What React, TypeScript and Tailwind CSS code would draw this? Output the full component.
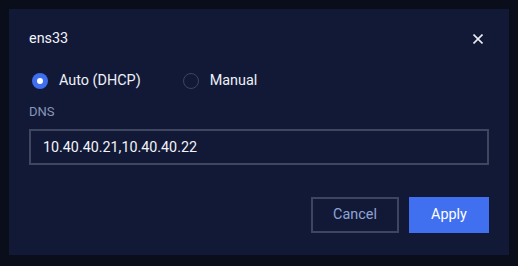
import { useState } from "react";

function Radio({ checked }: { checked: boolean }) {
  return checked ? (
    <span className="flex h-4 w-4 items-center justify-center rounded-full bg-[#3f6ef0]">
      <span className="h-1.5 w-1.5 rounded-full bg-white" />
    </span>
  ) : (
    <span className="h-4 w-4 rounded-full border border-[#3a4466]" />
  );
}

export default function App() {
  const [mode, setMode] = useState<"auto" | "manual">("auto");

  return (
    <div
      className="h-[266px] w-[518px] bg-[#0a0d1a] p-[9px]"
      style={{ fontFamily: "Roboto, 'Liberation Sans', sans-serif" }}
    >
      <div className="flex h-[246px] w-[500px] flex-col bg-[#121937] px-5 pt-5">
        {/* Header */}
        <div className="flex h-5 items-center justify-between">
          <span className="text-[14.4px] leading-5 text-[#f2f4f8]">ens33</span>
          <button className="mr-[3px] flex h-4 w-4 items-center justify-center text-[#e8ebf2]">
            <svg width="10" height="10" viewBox="0 0 10 10" fill="none">
              <path d="M0.5 0.5L9.5 9.5M9.5 0.5L0.5 9.5" stroke="currentColor" strokeWidth="1.6" />
            </svg>
          </button>
        </div>

        {/* Mode */}
        <div className="mt-[22px] flex h-5 items-center pl-[3px]">
          <label className="flex cursor-pointer items-center gap-[11px]" onClick={() => setMode("auto")}>
            <Radio checked={mode === "auto"} />
            <span className="text-[14.4px] leading-5 text-[#eef1f7]">Auto (DHCP)</span>
          </label>
          <label className="ml-[42px] flex cursor-pointer items-center gap-[11px]" onClick={() => setMode("manual")}>
            <Radio checked={mode === "manual"} />
            <span className="text-[14.4px] leading-5 text-[#eef1f7]">Manual</span>
          </label>
        </div>

        {/* DNS */}
        <div className="mt-[13px] text-[13px] leading-4 text-[#8796b8]">DNS</div>
        <input
          className="mt-[9px] h-9 w-full border-2 border-[#3f465f] bg-transparent px-3 text-[14.3px] text-[#f2f4f8] outline-none"
          defaultValue="10.40.40.21,10.40.40.22"
        />

        {/* Actions */}
        <div className="mt-8 flex justify-end gap-[10px]">
          <button className="h-9 w-[88px] border-2 border-[#3d4560] text-[14.4px] text-[#8ea4d6]">Cancel</button>
          <button className="h-9 w-20 bg-[#4070f0] text-[14.4px] text-white">Apply</button>
        </div>
      </div>
    </div>
  );
}
